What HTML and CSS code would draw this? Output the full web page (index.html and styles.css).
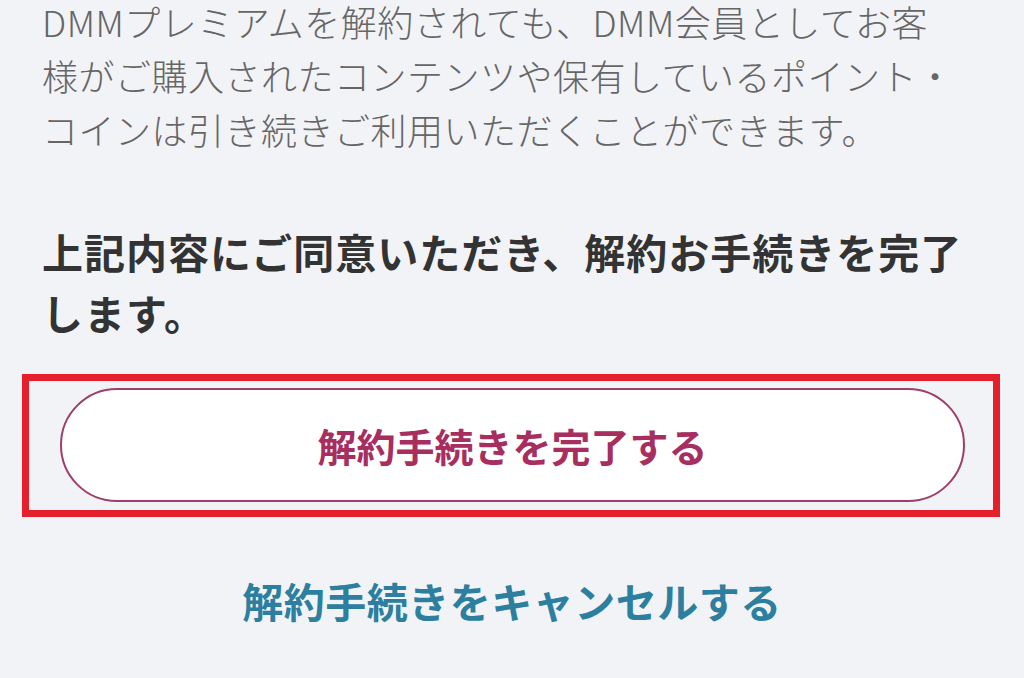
FILE: index.html
```html
<!DOCTYPE html>
<html lang="ja">
<head>
    <meta charset="UTF-8">
    <meta name="viewport" content="width=device-width, initial-scale=1.0">
    <title>DMMプレミアム 解約手続き</title>
    <link rel="stylesheet" href="styles.css">
</head>
<body>

<div class="content">
    <p class="note">
        DMMプレミアムを解約されても、DMM会員としてお客<br>
        様がご購入されたコンテンツや保有しているポイント・<br>
        コインは引き続きご利用いただくことができます。
    </p>

    <p class="agree">
        上記内容にご同意いただき、解約お手続きを完了<br>
        します。
    </p>
</div>

<div class="confirm-frame">
    <button class="complete-btn" type="button">解約手続きを完了する</button>
</div>

<div class="cancel">
    <a href="#" class="cancel-link">解約手続きをキャンセルする</a>
</div>

</body>
</html>
```

FILE: styles.css
```css
body {
    font-family: "Noto Sans CJK JP", "Noto Sans", sans-serif;
    background-color: #f2f3f7;
    margin: 0;
    padding: 0;
}

.content {
    padding: 0 42px;
}

.note {
    margin: -6px 0 0;
    font-size: 36px;
    font-weight: 300;
    line-height: 54px;
    color: #666;
    letter-spacing: 0.5px;
}

.agree {
    margin: 65px 0 0;
    font-size: 41px;
    line-height: 61px;
    font-weight: bold;
    color: #333;
    letter-spacing: 1px;
}

.confirm-frame {
    margin: 31px 24px 0 22px;
    border: 7px solid #e3202b;
    padding: 7px 28px 8px 31px;
}

.complete-btn {
    display: block;
    width: 100%;
    height: 114px;
    background-color: #fff;
    border: 2px solid #9d3f6c;
    border-radius: 57px;
    font-family: inherit;
    font-size: 39px;
    font-weight: bold;
    color: #a72e5f;
    cursor: pointer;
}

.cancel {
    margin-top: 53px;
    text-align: center;
    line-height: 60px;
}

.cancel-link {
    font-size: 41px;
    font-weight: bold;
    color: #2c7f9e;
    text-decoration: none;
    letter-spacing: 0.5px;
}
```
